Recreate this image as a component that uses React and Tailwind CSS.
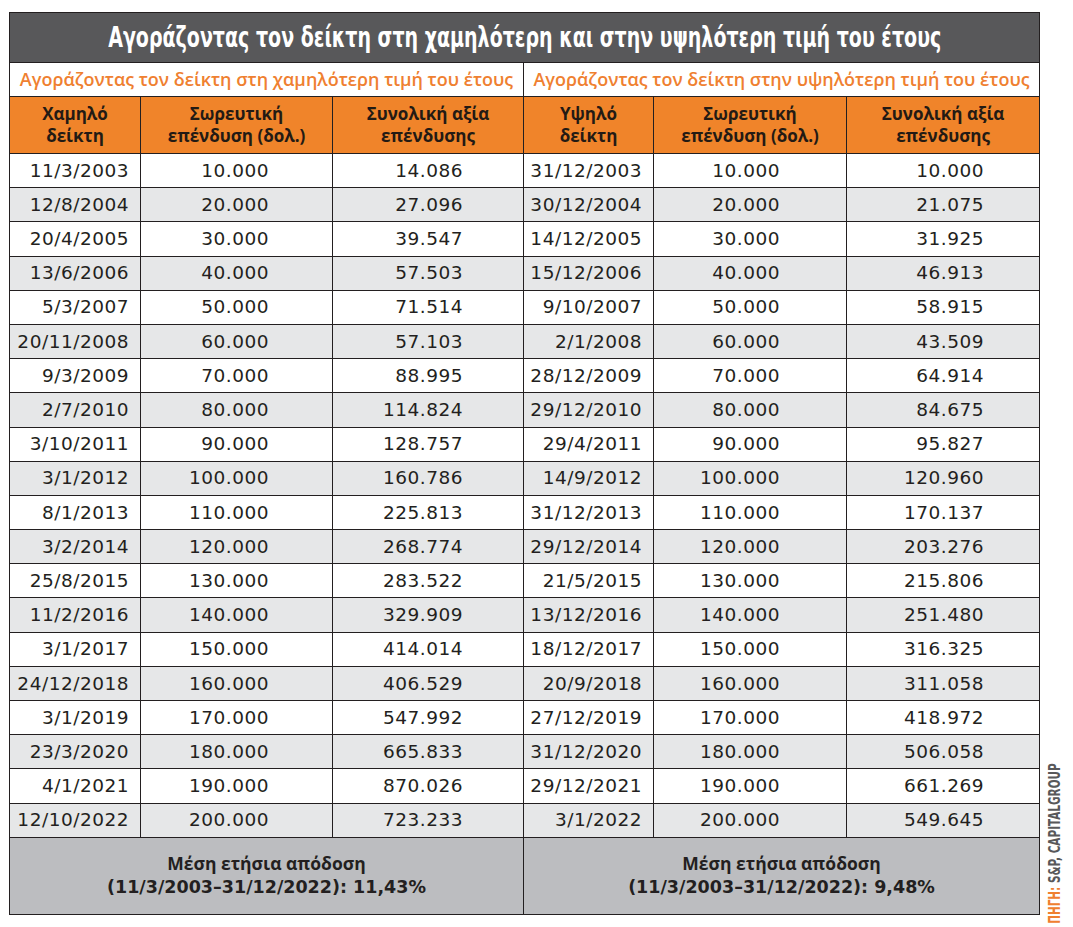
const lows = [
  ["11/3/2003", "10.000", "14.086"],
  ["12/8/2004", "20.000", "27.096"],
  ["20/4/2005", "30.000", "39.547"],
  ["13/6/2006", "40.000", "57.503"],
  ["5/3/2007", "50.000", "71.514"],
  ["20/11/2008", "60.000", "57.103"],
  ["9/3/2009", "70.000", "88.995"],
  ["2/7/2010", "80.000", "114.824"],
  ["3/10/2011", "90.000", "128.757"],
  ["3/1/2012", "100.000", "160.786"],
  ["8/1/2013", "110.000", "225.813"],
  ["3/2/2014", "120.000", "268.774"],
  ["25/8/2015", "130.000", "283.522"],
  ["11/2/2016", "140.000", "329.909"],
  ["3/1/2017", "150.000", "414.014"],
  ["24/12/2018", "160.000", "406.529"],
  ["3/1/2019", "170.000", "547.992"],
  ["23/3/2020", "180.000", "665.833"],
  ["4/1/2021", "190.000", "870.026"],
  ["12/10/2022", "200.000", "723.233"],
];

const highs = [
  ["31/12/2003", "10.000", "10.000"],
  ["30/12/2004", "20.000", "21.075"],
  ["14/12/2005", "30.000", "31.925"],
  ["15/12/2006", "40.000", "46.913"],
  ["9/10/2007", "50.000", "58.915"],
  ["2/1/2008", "60.000", "43.509"],
  ["28/12/2009", "70.000", "64.914"],
  ["29/12/2010", "80.000", "84.675"],
  ["29/4/2011", "90.000", "95.827"],
  ["14/9/2012", "100.000", "120.960"],
  ["31/12/2013", "110.000", "170.137"],
  ["29/12/2014", "120.000", "203.276"],
  ["21/5/2015", "130.000", "215.806"],
  ["13/12/2016", "140.000", "251.480"],
  ["18/12/2017", "150.000", "316.325"],
  ["20/9/2018", "160.000", "311.058"],
  ["27/12/2019", "170.000", "418.972"],
  ["31/12/2020", "180.000", "506.058"],
  ["29/12/2021", "190.000", "661.269"],
  ["3/1/2022", "200.000", "549.645"],
];

const cell = "border border-[#231f20] text-right whitespace-nowrap";

const Head = ({ children }) => (
  <th className="border border-[#231f20] bg-[#f0842a] font-bold text-[17px] leading-[22px] text-[#231a14] text-center align-middle font-['Open_Sans',sans-serif]">
    {children}
  </th>
);

const Sub = ({ children }) => (
  <th
    colSpan={3}
    className="border border-[#231f20] bg-white text-[#ef8030] font-semibold text-[18px] text-center whitespace-nowrap font-['Open_Sans',sans-serif]"
  >
    {children}
  </th>
);

const Foot = ({ rate }) => (
  <td colSpan={3} className="border border-[#231f20] text-center font-bold text-[17.5px] leading-[23px] whitespace-nowrap">
    <span className="font-['Open_Sans',sans-serif]">Μέση ετήσια απόδοση</span>
    <br />
    (11/3/2003–31/12/2022): {rate}
  </td>
);

const App = () => {
  return (
    <div className="min-h-[927px] bg-white pl-[9px] pt-[12px] flex items-start font-['DejaVu_Sans',sans-serif]">
      <table className="table-fixed border-collapse w-[1030px] text-[#231f20]">
        <colgroup>
          <col className="w-[131px]" />
          <col className="w-[192px]" />
          <col className="w-[191px]" />
          <col className="w-[130px]" />
          <col className="w-[193px]" />
          <col className="w-[193px]" />
        </colgroup>
        <thead>
          <tr className="h-[50px]">
            <th colSpan={6} className="border border-[#231f20] bg-[#58585a] p-0">
              <div className="flex justify-center overflow-hidden">
                <span className="shrink-0 whitespace-nowrap scale-x-[0.755] text-white font-bold text-[28px] leading-[48px] font-['Liberation_Sans_Narrow','DejaVu_Sans_Condensed',sans-serif]">
                  Αγοράζοντας τον δείκτη στη χαμηλότερη και στην υψηλότερη τιμή του έτους
                </span>
              </div>
            </th>
          </tr>
          <tr className="h-[34px]">
            <Sub>Αγοράζοντας τον δείκτη στη χαμηλότερη τιμή του έτους</Sub>
            <Sub>Αγοράζοντας τον δείκτη στην υψηλότερη τιμή του έτους</Sub>
          </tr>
          <tr className="h-[57px]">
            <Head>Χαμηλό<br />δείκτη</Head>
            <Head>Σωρευτική<br />επένδυση (δολ.)</Head>
            <Head>Συνολική αξία<br />επένδυσης</Head>
            <Head>Υψηλό<br />δείκτη</Head>
            <Head>Σωρευτική<br />επένδυση (δολ.)</Head>
            <Head>Συνολική αξία<br />επένδυσης</Head>
          </tr>
        </thead>
        <tbody className="text-[18.5px] tracking-[0.5px] font-normal">
          {lows.map((l, i) => {
            const h = highs[i];
            return (
              <tr key={l[0]} className={`h-[34.2px] ${i % 2 ? "bg-[#e6e7e8]" : "bg-white"}`}>
                <td className={`${cell} pr-[11px]`}>{l[0]}</td>
                <td className={`${cell} pr-[63px]`}>{l[1]}</td>
                <td className={`${cell} pr-[60px]`}>{l[2]}</td>
                <td className={`${cell} pr-[11px]`}>{h[0]}</td>
                <td className={`${cell} pr-[66px]`}>{h[1]}</td>
                <td className={`${cell} pr-[55px]`}>{h[2]}</td>
              </tr>
            );
          })}
          <tr className="h-[77px] bg-[#bcbdc0] tracking-normal">
            <Foot rate="11,43%" />
            <Foot rate="9,48%" />
          </tr>
        </tbody>
      </table>
      <div className="self-end mb-[-20px] ml-[7px] [writing-mode:vertical-rl] rotate-180 scale-y-[0.775] whitespace-nowrap font-bold text-[15px] leading-[16px] text-[#58585a] font-['Liberation_Sans_Narrow','DejaVu_Sans_Condensed',sans-serif]">
        <span className="text-[#ef8030]">ΠΗΓΗ:</span> S&amp;P, CAPITALGROUP
      </div>
    </div>
  );
};

export default App;
